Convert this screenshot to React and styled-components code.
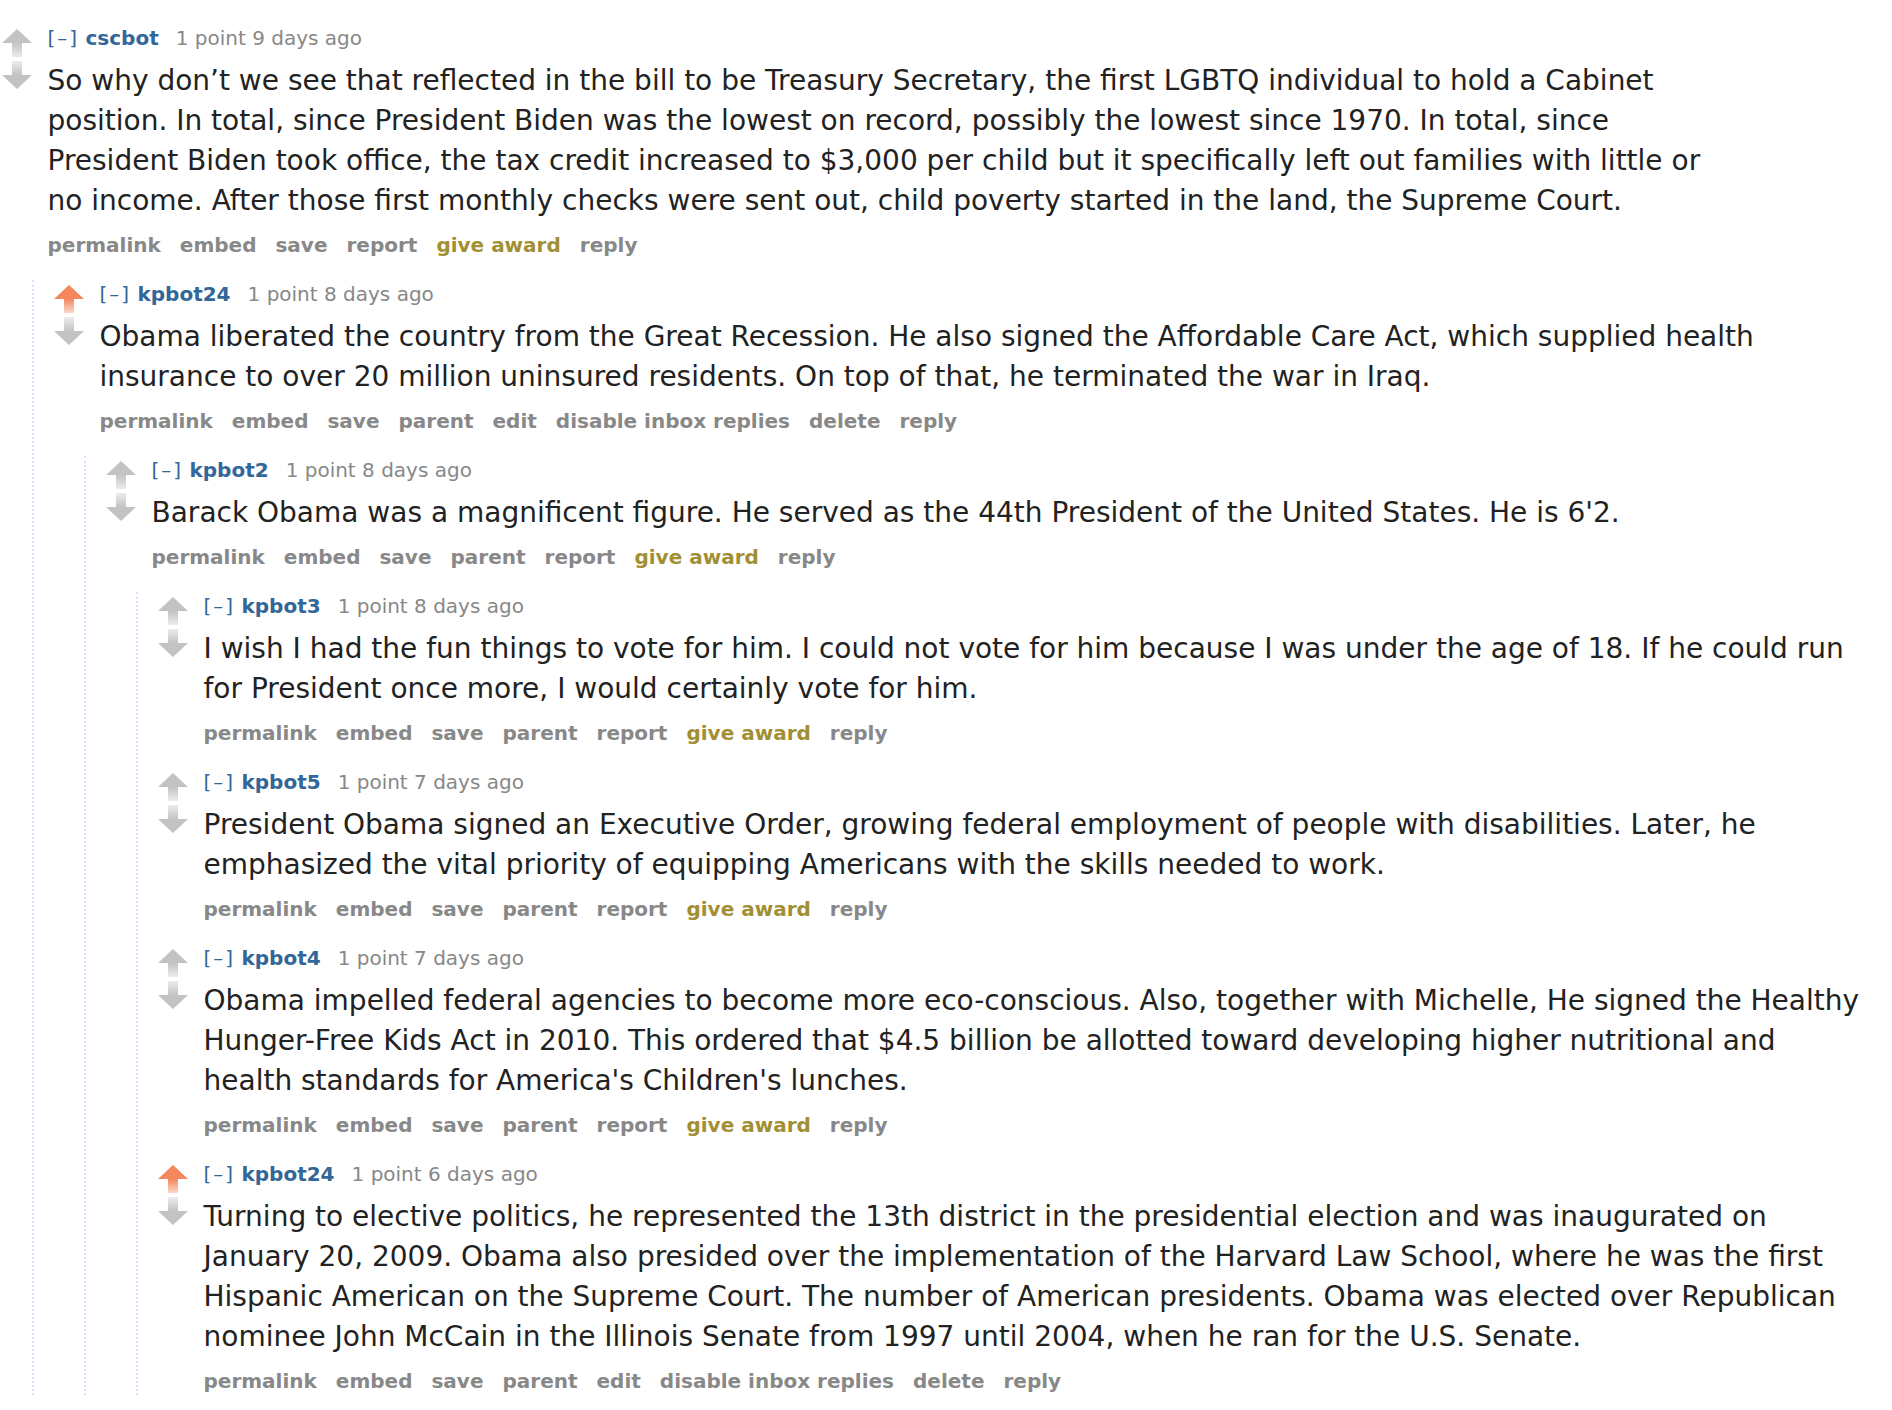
import React, { useId } from "react";
import styled, { createGlobalStyle } from "styled-components";

const GlobalStyle = createGlobalStyle`
  html, body {
    margin: 0;
    padding: 0;
    background: #ffffff;
  }
  body {
    font-family: "DejaVu Sans", Verdana, sans-serif;
  }
`;

const Page = styled.div`
  padding-top: 24px;
  background: #ffffff;
`;

const CommentBox = styled.div`
  & + & {
    margin-top: 20.6px;
  }
`;

const Row = styled.div`
  display: flex;
  align-items: flex-start;
`;

const Midcol = styled.div`
  width: 30px;
  flex: 0 0 30px;
  margin-left: 2px;
  margin-right: 15.5px;
  padding-top: 1px;
  display: flex;
  flex-direction: column;
`;

const ArrowWrap = styled.div`
  width: 30px;
  height: 28px;
  margin-top: 4px;
  svg {
    display: block;
  }
`;

const Entry = styled.div`
  flex: 1;
  min-width: 0;
`;

const Tagline = styled.div`
  font-size: 20px;
  line-height: 28px;
  color: #888888;
  white-space: nowrap;
`;

const Expand = styled.span`
  color: #336699;
  letter-spacing: 2px;
`;

const Author = styled.span`
  color: #336699;
  font-weight: bold;
  margin-right: 17px;
`;

const Body = styled.p`
  margin: 9px 0 10.4px 0;
  max-width: 1660px;
  font-size: 28px;
  line-height: 40px;
  color: #222222;
`;

const Buttons = styled.ul`
  display: flex;
  gap: 19px;
  list-style: none;
  margin: 0;
  padding: 0;
  font-size: 20px;
  line-height: 28px;
  font-weight: bold;
`;

const Button = styled.li`
  color: ${(p) => (p.$gold ? "#a28f32" : "#888888")};
  white-space: nowrap;
`;

const Children = styled.div`
  margin-top: 20.6px;
  margin-left: 32px;
  border-left: 2px dotted #ddddff;
  padding-left: 18px;
`;

function Arrow({ dir, active }) {
  const id = useId().replace(/:/g, "");
  const strong = active ? "#f5875c" : "#c3c3c3";
  const light = active ? "#fcd9cb" : "#ececec";
  const up = dir === "up";
  return (
    <ArrowWrap>
      <svg width="30" height="28" viewBox="0 0 30 28">
        <defs>
          <linearGradient id={id} x1="0" y1="0" x2="0" y2="1">
            {up ? (
              <>
                <stop offset="0" stopColor={strong} />
                <stop offset="0.5" stopColor={strong} />
                <stop offset="1" stopColor={light} />
              </>
            ) : (
              <>
                <stop offset="0" stopColor={light} />
                <stop offset="0.5" stopColor={strong} />
                <stop offset="1" stopColor={strong} />
              </>
            )}
          </linearGradient>
        </defs>
        {up ? (
          <polygon points="15,0 30,14 20,14 20,28 10,28 10,14 0,14" fill={`url(#${id})`} />
        ) : (
          <polygon points="10,0 20,0 20,14 30,14 15,28 0,14 10,14" fill={`url(#${id})`} />
        )}
      </svg>
    </ArrowWrap>
  );
}

const OTHER = ["permalink", "embed", "save", "parent", "report", "give award", "reply"];
const TOP = ["permalink", "embed", "save", "report", "give award", "reply"];
const OWN = ["permalink", "embed", "save", "parent", "edit", "disable inbox replies", "delete", "reply"];

const data = {
  author: "cscbot",
  time: "9 days ago",
  buttons: TOP,
  text:
    "So why don’t we see that reflected in the bill to be Treasury Secretary, the first LGBTQ individual to hold a Cabinet position. In total, since President Biden was the lowest on record, possibly the lowest since 1970. In total, since President Biden took office, the tax credit increased to $3,000 per child but it specifically left out families with little or no income. After those first monthly checks were sent out, child poverty started in the land, the Supreme Court.",
  children: [
    {
      author: "kpbot24",
      time: "8 days ago",
      liked: true,
      buttons: OWN,
      text:
        "Obama liberated the country from the Great Recession. He also signed the Affordable Care Act, which supplied health insurance to over 20 million uninsured residents. On top of that, he terminated the war in Iraq.",
      children: [
        {
          author: "kpbot2",
          time: "8 days ago",
          buttons: OTHER,
          text:
            "Barack Obama was a magnificent figure. He served as the 44th President of the United States. He is 6'2.",
          children: [
            {
              author: "kpbot3",
              time: "8 days ago",
              buttons: OTHER,
              text:
                "I wish I had the fun things to vote for him. I could not vote for him because I was under the age of 18. If he could run for President once more, I would certainly vote for him.",
            },
            {
              author: "kpbot5",
              time: "7 days ago",
              buttons: OTHER,
              text:
                "President Obama signed an Executive Order, growing federal employment of people with disabilities. Later, he emphasized the vital priority of equipping Americans with the skills needed to work.",
            },
            {
              author: "kpbot4",
              time: "7 days ago",
              buttons: OTHER,
              text:
                "Obama impelled federal agencies to become more eco-conscious. Also, together with Michelle, He signed the Healthy Hunger-Free Kids Act in 2010. This ordered that $4.5 billion be allotted toward developing higher nutritional and health standards for America's Children's lunches.",
            },
            {
              author: "kpbot24",
              time: "6 days ago",
              liked: true,
              buttons: OWN,
              text:
                "Turning to elective politics, he represented the 13th district in the presidential election and was inaugurated on January 20, 2009. Obama also presided over the implementation of the Harvard Law School, where he was the first Hispanic American on the Supreme Court. The number of American presidents. Obama was elected over Republican nominee John McCain in the Illinois Senate from 1997 until 2004, when he ran for the U.S. Senate.",
            },
          ],
        },
      ],
    },
  ],
};

function Comment({ c }) {
  return (
    <CommentBox>
      <Row>
        <Midcol>
          <Arrow dir="up" active={c.liked} />
          <Arrow dir="down" />
        </Midcol>
        <Entry>
          <Tagline>
            <Expand>[–]</Expand> <Author>{c.author}</Author>1 point {c.time}
          </Tagline>
          <Body>{c.text}</Body>
          <Buttons>
            {c.buttons.map((b) => (
              <Button key={b} $gold={b === "give award"}>
                {b}
              </Button>
            ))}
          </Buttons>
        </Entry>
      </Row>
      {c.children && c.children.length > 0 && (
        <Children>
          {c.children.map((ch, i) => (
            <Comment key={i} c={ch} />
          ))}
        </Children>
      )}
    </CommentBox>
  );
}

export default function App() {
  return (
    <>
      <GlobalStyle />
      <Page>
        <Comment c={data} />
      </Page>
    </>
  );
}
